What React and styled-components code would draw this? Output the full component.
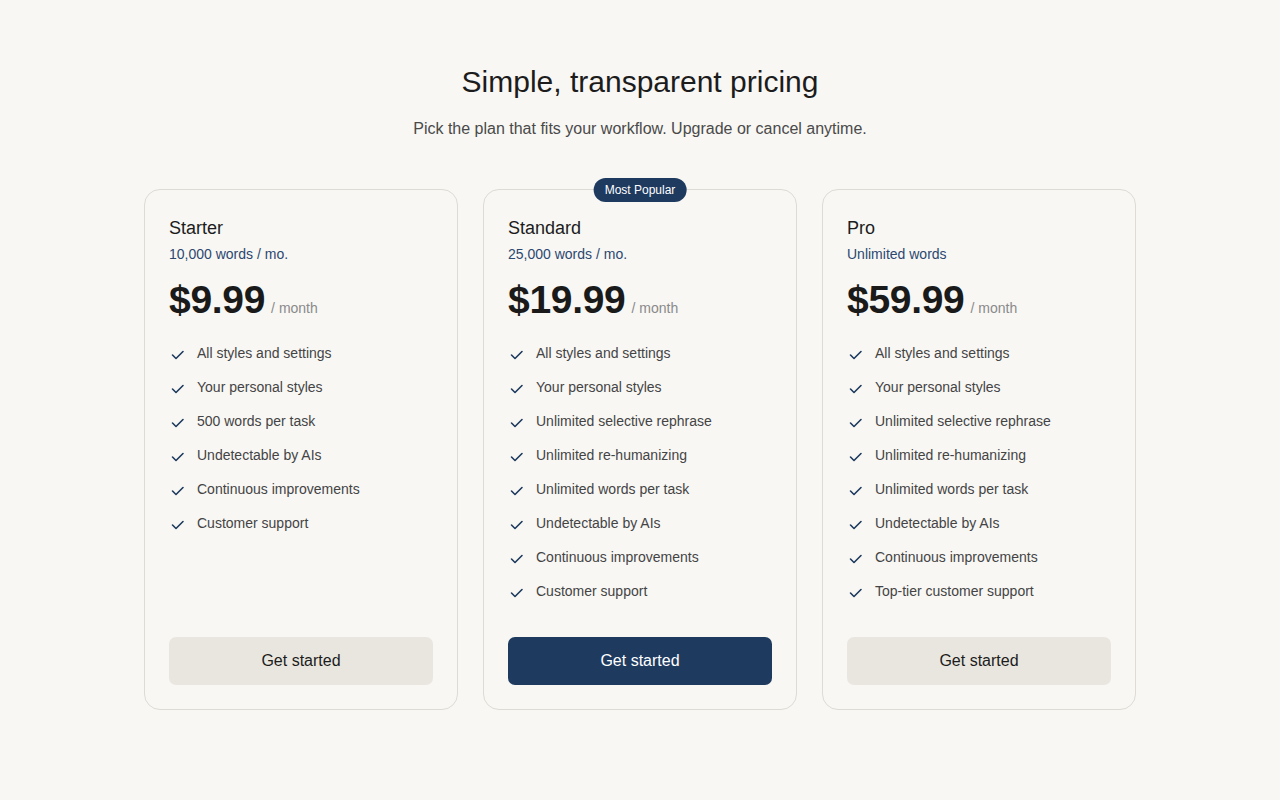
import React from 'react'
import styled, { createGlobalStyle } from 'styled-components'

const GlobalStyle = createGlobalStyle`
  body {
    margin: 0;
    background: #f8f7f3;
    font-family: 'Liberation Sans', Arial, sans-serif;
    color: #1c1c1c;
  }
`

const Page = styled.main`
  min-height: 800px;
  display: flex;
  flex-direction: column;
  align-items: center;
  padding-top: 63px;
  box-sizing: border-box;
`

const Title = styled.h1`
  margin: 0;
  font-size: 30px;
  font-weight: 400;
  line-height: 38px;
  color: #1c1c1c;
`

const Subtitle = styled.p`
  margin: 18px 0 0;
  font-size: 16px;
  line-height: 20px;
  color: #4a4a4a;
`

const Grid = styled.div`
  margin-top: 50px;
  display: grid;
  grid-template-columns: repeat(3, 314px);
  gap: 25px;
`

const Card = styled.section`
  position: relative;
  height: 521px;
  box-sizing: border-box;
  border: 1px solid #dedbd4;
  border-radius: 16px;
  background: #f8f7f4;
  padding: 27px 24px 24px;
  display: flex;
  flex-direction: column;
`

const Badge = styled.span`
  position: absolute;
  top: -12px;
  left: 50%;
  transform: translateX(-50%);
  height: 24px;
  padding: 0 11px;
  border-radius: 12px;
  background: #1e3a5f;
  color: #fff;
  font-size: 12px;
  line-height: 24px;
  white-space: nowrap;
`

const PlanName = styled.h2`
  margin: 0;
  font-size: 18px;
  font-weight: 400;
  line-height: 22px;
  color: #1c1c1c;
`

const Quota = styled.div`
  margin-top: 6px;
  font-size: 14px;
  line-height: 18px;
  color: #2c4770;
`

const PriceRow = styled.div`
  margin-top: 13px;
  display: flex;
  align-items: baseline;
  gap: 6px;
`

const Price = styled.span`
  font-size: 39px;
  font-weight: 700;
  line-height: 48px;
  letter-spacing: -0.3px;
  color: #1a1a1a;
`

const Per = styled.span`
  font-size: 14px;
  color: #8a8a8a;
`

const Features = styled.ul`
  list-style: none;
  margin: 20px 0 0;
  padding: 0;
  display: flex;
  flex-direction: column;
  gap: 16px;
  flex: 1;
`

const Feature = styled.li`
  display: flex;
  align-items: center;
  gap: 10px;
  font-size: 14px;
  line-height: 18px;
  color: #444;
`

const Check = styled.svg`
  width: 18px;
  height: 18px;
  flex: none;
`

const CtaButton = styled.button`
  height: 48px;
  width: 100%;
  border: none;
  border-radius: 7px;
  font-family: inherit;
  font-size: 16px;
  cursor: pointer;
  background: ${p => (p.$primary ? '#1e3a5f' : '#e9e6df')};
  color: ${p => (p.$primary ? '#fff' : '#1c1c1c')};
`

const plans = [
  {
    name: 'Starter',
    quota: '10,000 words / mo.',
    price: '$9.99',
    features: [
      'All styles and settings',
      'Your personal styles',
      '500 words per task',
      'Undetectable by AIs',
      'Continuous improvements',
      'Customer support'
    ]
  },
  {
    name: 'Standard',
    quota: '25,000 words / mo.',
    price: '$19.99',
    popular: true,
    features: [
      'All styles and settings',
      'Your personal styles',
      'Unlimited selective rephrase',
      'Unlimited re-humanizing',
      'Unlimited words per task',
      'Undetectable by AIs',
      'Continuous improvements',
      'Customer support'
    ]
  },
  {
    name: 'Pro',
    quota: 'Unlimited words',
    price: '$59.99',
    features: [
      'All styles and settings',
      'Your personal styles',
      'Unlimited selective rephrase',
      'Unlimited re-humanizing',
      'Unlimited words per task',
      'Undetectable by AIs',
      'Continuous improvements',
      'Top-tier customer support'
    ]
  }
]

const CheckIcon = () => (
  <Check viewBox="0 0 18 18" fill="none">
    <path d="M3.5 11l3.5 3.5 7-7" stroke="#1e3a5f" strokeWidth="1.6" strokeLinecap="round" strokeLinejoin="round" />
  </Check>
)

export default function App () {
  return (
    <>
      <GlobalStyle />
      <Page>
        <Title>Simple, transparent pricing</Title>
        <Subtitle>Pick the plan that fits your workflow. Upgrade or cancel anytime.</Subtitle>
        <Grid>
          {plans.map(plan => (
            <Card key={plan.name}>
              {plan.popular && <Badge>Most Popular</Badge>}
              <PlanName>{plan.name}</PlanName>
              <Quota>{plan.quota}</Quota>
              <PriceRow>
                <Price>{plan.price}</Price>
                <Per>/ month</Per>
              </PriceRow>
              <Features>
                {plan.features.map(f => (
                  <Feature key={f}>
                    <CheckIcon />
                    {f}
                  </Feature>
                ))}
              </Features>
              <CtaButton $primary={plan.popular}>Get started</CtaButton>
            </Card>
          ))}
        </Grid>
      </Page>
    </>
  )
}
